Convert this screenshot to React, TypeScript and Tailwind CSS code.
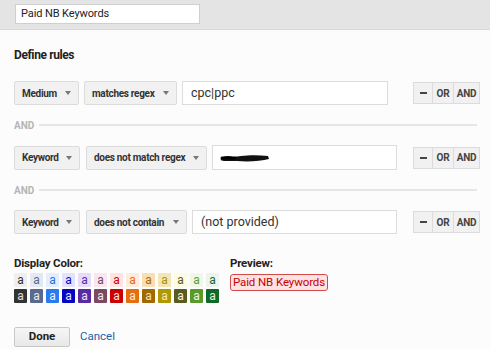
import React from 'react';

const light = [
  ['#efefef', '#333333'],
  ['#e3e8f2', '#5b6a8c'],
  ['#e2eeff', '#2a70e0'],
  ['#e2e2ff', '#0a0ac8'],
  ['#e6dcfa', '#5a2aa8'],
  ['#f9e6ee', '#7a4a60'],
  ['#ffe2e2', '#cc0000'],
  ['#ffeadb', '#e56a10'],
  ['#f8dfb6', '#a86c00'],
  ['#f3e6b4', '#a89200'],
  ['#fdfce0', '#5a5a22'],
  ['#f1f7e8', '#5aa02a'],
  ['#edf3ed', '#16682c'],
];

const dark = [
  ['#333333', '#e0e0e0'],
  ['#5b6a8c', '#e8ecf4'],
  ['#2a7af0', '#e8f2ff'],
  ['#0505c4', '#e4e4ff'],
  ['#5a2aa2', '#ece4fa'],
  ['#7a4a60', '#f6e6ee'],
  ['#cc0000', '#ffe2e2'],
  ['#e56f0f', '#ffeadb'],
  ['#a06a00', '#f8dfb6'],
  ['#b09800', '#f6eab8'],
  ['#5a5a22', '#f8f8dc'],
  ['#5a9a2a', '#eef6e4'],
  ['#0f6a2a', '#e4f2e4'],
];

const Select: React.FC<{ label: string; width: string }> = ({ label, width }) => (
  <div className={`${width} shrink-0 h-[24px] flex items-center justify-between pl-[7px] pr-[7px] bg-[#f1f1f1] border border-[#dcdcdc] rounded-[2px] text-[10px] tracking-[-0.3px] font-bold text-[#333] whitespace-nowrap`}>
    <span>{label}</span>
    <span className="w-0 h-0 border-l-[3px] border-r-[3px] border-t-[4px] border-l-transparent border-r-transparent border-t-[#777]" />
  </div>
);

const Buttons: React.FC = () => (
  <div className="ml-auto shrink-0 flex h-[22px] text-[10px] tracking-[-0.2px] font-bold text-[#444]">
    <div className="w-[20px] flex items-center justify-center bg-[#f1f1f1] border border-[#dcdcdc]">
      <span className="block w-[7px] h-[2px] bg-[#444]" />
    </div>
    <div className="w-[20px] flex items-center justify-center bg-[#f1f1f1] border-y border-[#dcdcdc]">OR</div>
    <div className="w-[27px] flex items-center justify-center bg-[#f1f1f1] border border-[#dcdcdc]">AND</div>
  </div>
);

const Separator: React.FC = () => (
  <div className="h-[40px] flex items-center gap-[5px] pr-[3px]">
    <span className="text-[10px] font-bold text-[#b5b5b5]">AND</span>
    <div className="flex-1 h-[2px] bg-[#e6e6e6]" />
  </div>
);

export default function App() {
  return (
    <div className="w-[490px] h-[350px] bg-[#fcfcfc] overflow-hidden" style={{ fontFamily: 'Roboto, "Liberation Sans", sans-serif' }}>
      {/* Name bar */}
      <div className="h-[30px] bg-[#e4e4e4] border-b border-[#d8d8d8] pt-[4px] pl-[15px]">
        <div className="w-[185px] h-[20px] bg-white border border-[#cfcfcf] flex items-center pl-[5px] text-[11px] tracking-[-0.1px] text-[#222]">
          Paid NB Keywords
        </div>
      </div>

      <div className="pl-[14px] pr-[10px]">
        <h2 className="mt-[17px] text-[12px] tracking-[-0.4px] leading-[16px] font-bold text-[#222]">Define rules</h2>

        {/* Rule 1 */}
        <div className="mt-[18px] flex items-center">
          <Select label="Medium" width="w-[65px]" />
          <div className="w-[5px] shrink-0" />
          <Select label="matches regex" width="w-[93px]" />
          <div className="w-[5px] shrink-0" />
          <div className="w-[206px] shrink-0 h-[24px] bg-white border border-[#dcdcdc] flex items-center pl-[8px] text-[12.5px] text-[#333]">cpc|ppc</div>
          <Buttons />
        </div>

        <Separator />

        {/* Rule 2 */}
        <div className="flex items-center">
          <Select label="Keyword" width="w-[66px]" />
          <div className="w-[6px] shrink-0" />
          <Select label="does not match regex" width="w-[121px]" />
          <div className="w-[5px] shrink-0" />
          <div className="w-[185px] shrink-0 h-[25px] bg-white border border-[#dcdcdc] flex items-center pl-[6px]">
            <svg width="52" height="10" viewBox="0 0 52 10">
              <path d="M2 6 C6 2, 10 3, 14 4 L22 3 C30 2, 40 2, 49 3 L50 6 C42 8, 30 9, 18 8 L6 8 C3 8, 1 7, 2 6 Z" fill="#111" />
              <path d="M3 5 L16 5" stroke="#000" strokeWidth="3" strokeLinecap="round" />
            </svg>
          </div>
          <Buttons />
        </div>

        <Separator />

        {/* Rule 3 */}
        <div className="flex items-center">
          <Select label="Keyword" width="w-[66px]" />
          <div className="w-[6px] shrink-0" />
          <Select label="does not contain" width="w-[101px]" />
          <div className="w-[5px] shrink-0" />
          <div className="w-[205px] shrink-0 h-[24px] bg-white border border-[#dcdcdc] flex items-center pl-[8px] text-[12.5px] text-[#333]">(not provided)</div>
          <Buttons />
        </div>

        {/* Colour + preview */}
        <div className="mt-[22px] flex">
          <div className="shrink-0">
            <div className="text-[11.5px] tracking-[-0.2px] leading-[14px] font-bold text-[#222]">Display Color:</div>
            <div className="mt-[3px] flex flex-col gap-[2px]">
              {[light, dark].map((row, r) => (
                <div key={r} className="flex gap-[3px]">
                  {row.map(([bg, fg], i) => (
                    <div
                      key={i}
                      className="w-[13px] h-[14px] rounded-[1px] flex items-center justify-center text-[12px] leading-none pb-[1px]"
                      style={{ backgroundColor: bg, color: fg }}
                    >
                      a
                    </div>
                  ))}
                </div>
              ))}
            </div>
          </div>
          <div className="ml-[11px] shrink-0">
            <div className="text-[11.5px] tracking-[-0.2px] leading-[14px] font-bold text-[#222]">Preview:</div>
            <div className="mt-[4px] w-[98px] h-[17px] flex items-center justify-center rounded-[3px] border border-[#d04a4a] bg-[#ffe2e2] text-[11.5px] tracking-[-0.1px] text-[#c80000] whitespace-nowrap">
              Paid NB Keywords
            </div>
          </div>
        </div>

        {/* Actions */}
        <div className="mt-[24px] flex items-center">
          <button className="w-[56px] h-[20px] bg-gradient-to-b from-[#f6f6f6] to-[#e8e8e8] border border-[#c8c8c8] rounded-[2px] text-[11.5px] font-bold text-[#222]">
            Done
          </button>
          <span className="ml-[10px] text-[11.5px] text-[#2261a8]">Cancel</span>
        </div>
      </div>
    </div>
  );
}
